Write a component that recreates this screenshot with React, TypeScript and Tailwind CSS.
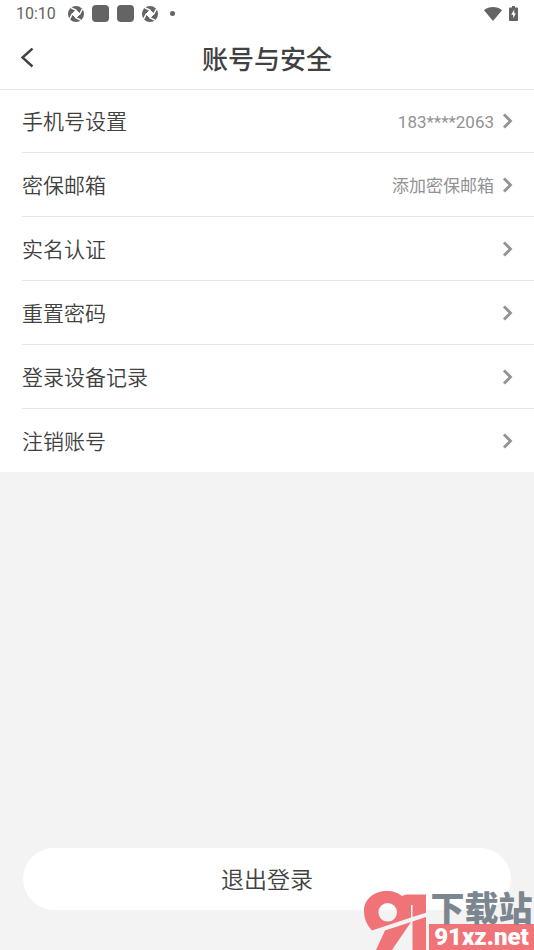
const rows = [
  { label: "手机号设置", value: "183****2063" },
  { label: "密保邮箱", value: "添加密保邮箱" },
  { label: "实名认证" },
  { label: "重置密码" },
  { label: "登录设备记录" },
  { label: "注销账号" },
];

function ShutterIcon() {
  return (
    <svg viewBox="0 0 16 16" className="h-4 w-4" aria-hidden="true">
      <circle cx="8" cy="8" r="8" fill="#646464" />
      <path d="M8 4 12 8 8 12 4 8Z" fill="#fff" stroke="#fff" />
      <g stroke="#fff" strokeWidth="1.500">
        <path d="M8.500 4.500 2.800 1.600M11.500 8.500 14.400 2.800M7.500 11.500 13.200 14.400M4.500 7.500 1.600 13.200" />
      </g>
    </svg>
  );
}

function StatusBar() {
  return (
    <div className="flex h-[27px] items-center justify-between px-4 text-[#646464]">
      <div className="flex items-center">
        <span className="text-base leading-5">10:10</span>
        <div className="ml-3 flex items-center gap-2">
          <ShutterIcon />
          <span className="h-[17px] w-[17px] rounded bg-[#646464]" />
          <span className="h-[17px] w-[17px] rounded bg-[#646464]" />
          <ShutterIcon />
          <span className="ml-1 h-[5px] w-[5px] rounded-full bg-[#646464]" />
        </div>
      </div>
      <div className="flex items-center gap-[7px]">
        <svg viewBox="0 0 18 14" className="h-[14px] w-[18px]" aria-hidden="true">
          <path d="M0 3.200C5-1 13-1 18 3.200L9 14Z" fill="#646464" />
        </svg>
        <svg viewBox="0 0 9 15" className="h-[15px] w-[9px]" aria-hidden="true">
          <path d="M3 0h3v1.500h2.200q.8 0 .8.8v11.900q0 .8-.8.8H.8Q0 15 0 14.200V2.300q0-.8.8-.8H3Z" fill="#646464" />
          <path d="M5.200 3.500 2.200 8.800h2V12.500L6.800 7.200H5.200Z" fill="#fff" />
        </svg>
      </div>
    </div>
  );
}

function Watermark() {
  return (
    <div className="absolute right-0 bottom-0 flex items-end gap-[2px]">
      <svg viewBox="0 0 63 59" className="h-[59px] w-[63px]" fill="#f07477" aria-hidden="true">
        <path
          fillRule="evenodd"
          d="M8 39.500C3 34 0 28 0 20C0 8 10 0 23 0C30 0 34 2 38 5L42 3.500H62V21.700L48.500 26V14H47V26.500ZM23.700 12a9.300 9.300 0 1 0 0 18.600a9.300 9.300 0 0 0 0-18.600Z"
        />
        <path d="M21 39.500 47 31 28 59H12Z" />
        <path d="M48.500 30.500 62 26V59H48.500Z" />
      </svg>
      <div className="w-[105px] text-center whitespace-nowrap">
        <div className="text-[34px] leading-[30px] font-black text-[#7b868e]">下载站</div>
        <div className="bg-[#f07477] text-2xl leading-[26px] font-black text-white">91xz.net</div>
      </div>
    </div>
  );
}

export default function App() {
  return (
    <div className="relative flex min-h-screen flex-col bg-[#f3f3f3] font-['Roboto','Noto_Sans_CJK_SC',sans-serif] text-[#414141]">
      <header className="relative bg-white shadow-[0_1px_0_#e6e6e6]">
        <StatusBar />
        <div className="grid h-[62px] grid-cols-[1fr_auto_1fr] items-center px-5">
          <button type="button" aria-label="返回" className="justify-self-start">
            <svg viewBox="0 0 14 20" className="h-5 w-[14px]" fill="none" stroke="#414141" strokeWidth="2.400" aria-hidden="true">
              <path d="M12.500.5 2.500 9.500l10 9" />
            </svg>
          </button>
          <h1 className="pt-1 text-[26px] leading-8 font-medium">账号与安全</h1>
        </div>
      </header>

      <ul className="bg-white pl-[22px]">
        {rows.map((row) => (
          <li key={row.label} className="border-b border-[#e6e6e6] last:border-b-0">
            <button type="button" className="flex h-[63px] w-full items-center pr-[21px] text-left">
              <span className="flex-1 pt-0.5 text-[21px] leading-8 font-[350]">{row.label}</span>
              {row.value ? <span className="pt-0.5 text-[17px] leading-6 text-[#929292]">{row.value}</span> : null}
              <svg viewBox="0 0 11 16" className="ml-2 h-4 w-[11px]" fill="none" stroke="#929292" strokeWidth="2.800" aria-hidden="true">
                <path d="M2 1.500 8.500 8 2 14.500" />
              </svg>
            </button>
          </li>
        ))}
      </ul>

      <div className="mt-auto px-[23px] pb-10">
        <button type="button" className="h-[62px] w-full rounded-full bg-white pt-1 text-[23px] leading-8 font-[350]">
          退出登录
        </button>
      </div>

      <Watermark />
    </div>
  );
}
